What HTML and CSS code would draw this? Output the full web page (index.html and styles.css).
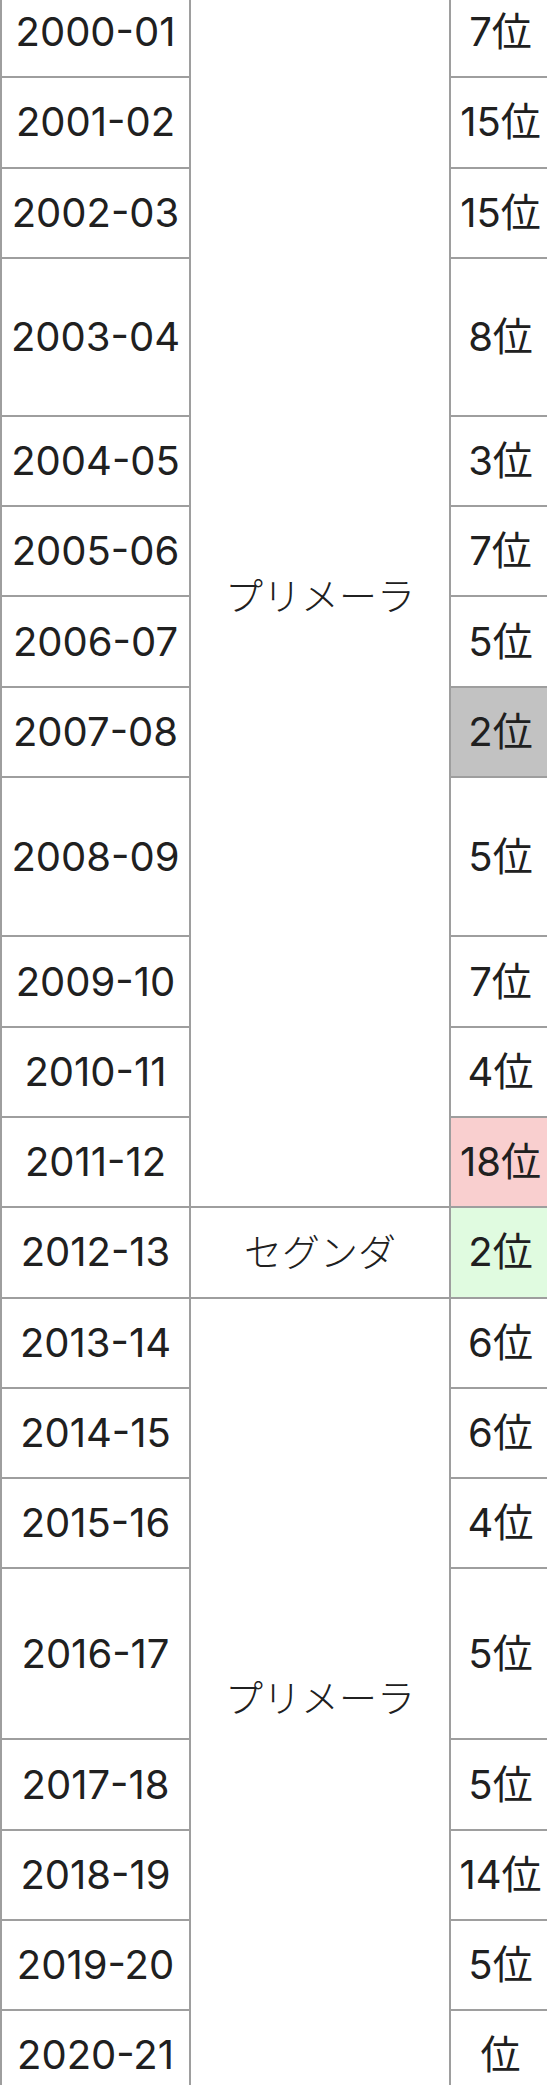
FILE: index.html
```html
<!DOCTYPE html>
<html lang="ja">
<head>
<meta charset="utf-8">
<title>Season table</title>
<link rel="stylesheet" href="styles.css">
</head>
<body>
<table class="seasons">
<colgroup><col class="c-season"><col class="c-league"><col class="c-rank"></colgroup>
<tbody>
<tr class="row"><td class="season">2000-01</td><td class="league" rowspan="12">プリメーラ</td><td class="rank">7位</td></tr>
<tr class="row"><td class="season">2001-02</td><td class="rank">15位</td></tr>
<tr class="row"><td class="season">2002-03</td><td class="rank">15位</td></tr>
<tr class="row tall-a"><td class="season">2003-04</td><td class="rank">8位</td></tr>
<tr class="row"><td class="season">2004-05</td><td class="rank">3位</td></tr>
<tr class="row"><td class="season">2005-06</td><td class="rank">7位</td></tr>
<tr class="row"><td class="season">2006-07</td><td class="rank">5位</td></tr>
<tr class="row"><td class="season">2007-08</td><td class="rank silver">2位</td></tr>
<tr class="row tall-b"><td class="season">2008-09</td><td class="rank">5位</td></tr>
<tr class="row"><td class="season">2009-10</td><td class="rank">7位</td></tr>
<tr class="row"><td class="season">2010-11</td><td class="rank">4位</td></tr>
<tr class="row"><td class="season">2011-12</td><td class="rank down">18位</td></tr>
<tr class="row"><td class="season">2012-13</td><td class="league">セグンダ</td><td class="rank up">2位</td></tr>
<tr class="row"><td class="season">2013-14</td><td class="league" rowspan="8">プリメーラ</td><td class="rank">6位</td></tr>
<tr class="row"><td class="season">2014-15</td><td class="rank">6位</td></tr>
<tr class="row"><td class="season">2015-16</td><td class="rank">4位</td></tr>
<tr class="row tall-c"><td class="season">2016-17</td><td class="rank">5位</td></tr>
<tr class="row"><td class="season">2017-18</td><td class="rank">5位</td></tr>
<tr class="row"><td class="season">2018-19</td><td class="rank">14位</td></tr>
<tr class="row"><td class="season">2019-20</td><td class="rank">5位</td></tr>
<tr class="row"><td class="season">2020-21</td><td class="rank">位</td></tr>
</tbody>
</table>
</body>
</html>
```

FILE: styles.css
```css
html {
  overflow: hidden;
  background: #fff;
}

body {
  margin: 0;
  font-family: Inter, "Noto Sans CJK JP", sans-serif;
  color: #202020;
}

.seasons {
  border-collapse: collapse;
  table-layout: fixed;
  width: 550px;
  margin-top: -14px;
  font-size: 40px;
}

.c-season { width: 189px; }
.c-league { width: 260px; }
.c-rank { width: 101px; }

.seasons td {
  border: 2px solid #9e9e9e;
  padding: 0;
  text-align: center;
  vertical-align: middle;
  white-space: nowrap;
  line-height: 1.2;
}

.row { height: 90.3px; }
.tall-a { height: 157.9px; }
.tall-b { height: 159.4px; }
.tall-c { height: 171px; }

.league {
  font-size: 38px;
  font-weight: 300;
}

.silver { background: #c2c2c2; }
.down { background: #f9cfcf; }
.up { background: #e0fbe0; }
```
